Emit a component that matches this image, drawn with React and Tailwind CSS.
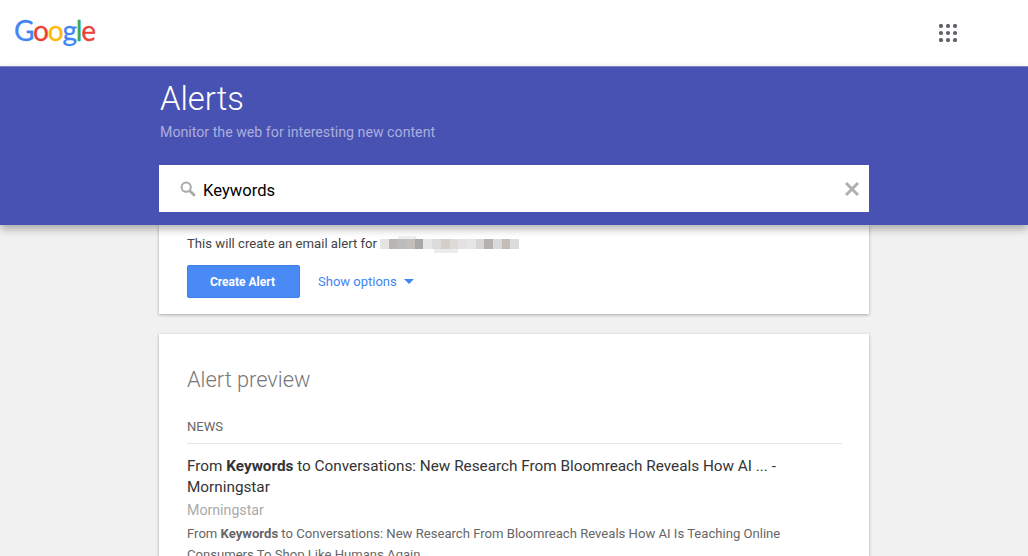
const font = "font-['Roboto','Liberation_Sans',sans-serif]";

const blurBlocks = [
  'bg-[#e4e4e4]', 'bg-[#b9b5b2]', 'bg-[#bdbcbd]', 'bg-[#c3bfbb]', 'bg-[#aaa8a7]',
  'bg-[#e6e6e6]', 'bg-[#dcdcdc]', 'bg-[#d2ceca]', 'bg-[#dddbd9]', 'bg-[#e2e2e2]',
  'bg-[#e6e6e6]', 'bg-[#d8d6d4]', 'bg-[#b5b1ae]', 'bg-[#d9dadc]', 'bg-[#c3bdb9]',
  'bg-[#dadcde]',
];

const Logo = () => (
  <span className="font-['Lato',sans-serif] text-[28px] leading-none tracking-[-1.2px] [-webkit-text-stroke:0.3px] select-none -mt-[6px]">
    <span className="text-[#4285f4]">G</span>
    <span className="text-[#ea4335]">o</span>
    <span className="text-[#fbbc05]">o</span>
    <span className="text-[#4285f4]">g</span>
    <span className="text-[#34a853]">l</span>
    <span className="text-[#ea4335]">e</span>
  </span>
);

const AppsIcon = () => (
  <svg width="18" height="18" viewBox="0 0 18 18" fill="#5f6368">
    {[2, 9, 16].map(y => [2, 9, 16].map(x => <circle key={`${x}-${y}`} cx={x} cy={y} r="2.1" />))}
  </svg>
);

const SearchIcon = () => (
  <svg width="16" height="16" viewBox="0 0 16 16" fill="none" stroke="#aaaaaa" className="shrink-0">
    <circle cx="6.2" cy="6.2" r="4.6" strokeWidth="2" />
    <path d="M9.8 9.8l5 5" strokeWidth="2.8" />
  </svg>
);

export default function App() {
  return (
    <div className={`${font} h-[556px] overflow-hidden bg-[#f1f1f1]`}>
      <header className="h-[66px] bg-white flex items-center justify-between pl-[14px] pr-[71px]">
        <Logo />
        <AppsIcon />
      </header>

      <div className="relative z-10 h-[159px] bg-[#4852b2] border-t border-[#7c84c8] shadow-[0_4px_8px_rgba(0,0,0,0.3)] pl-[159px]">
        <h1 className="text-[32.8px] leading-[38px] font-light text-white mt-[13px] pl-[1px]">Alerts</h1>
        <p className="text-[14.2px] leading-5 text-[#a9aedd] mt-[4px] pl-[1px]">Monitor the web for interesting new content</p>
        <div className="w-[710px] h-[47px] mt-[23px] bg-white flex items-center pl-[21px] pr-[8px]">
          <SearchIcon />
          <span className="ml-[7px] pt-[5px] text-[16.6px] text-black flex-1">Keywords</span>
          <svg width="18" height="18" viewBox="0 0 18 18" stroke="#b0b0b0" strokeWidth="3">
            <path d="M3 3l12 12M15 3L3 15" />
          </svg>
        </div>
      </div>

      <main className="w-[710px] ml-[159px]">
        <section className="h-[89px] bg-white shadow-[0_1px_3px_rgba(0,0,0,0.3)] px-[28px] pt-[10px]">
          <div className="flex items-center text-[13.15px] leading-[18px] text-[#444444]">
            <span>This will create an email alert for</span>
            <div className="relative flex ml-[3px] h-[10px]">
              {blurBlocks.map((c, i) => <div key={i} className={`w-[8.7px] ${c}`} />)}
              <div className="absolute left-[54px] top-[10px] w-[24px] h-[4px] bg-[#ececec]" />
              <div className="absolute left-[18px] -top-[3px] w-[18px] h-[3px] bg-[#efefef]" />
            </div>
          </div>
          <div className="flex items-center mt-[12px]">
            <button className="w-[113px] h-[33px] rounded-[2px] bg-[#4a8af4] border border-[#3f7fe8] text-white text-xs font-bold pr-[2px]">
              Create Alert
            </button>
            <span className="ml-[18px] text-[13px] text-[#4285f4]">Show options</span>
            <span className="ml-[7px] w-0 h-0 border-x-[5px] border-x-transparent border-t-[5px] border-t-[#4285f4]" />
          </div>
        </section>

        <section className="mt-[20px] bg-white shadow-[0_1px_3px_rgba(0,0,0,0.3)] pl-[28px] pr-[27px] pt-[32px] pb-6">
          <h2 className="text-[21.8px] leading-7 font-light text-[#777777]">Alert preview</h2>
          <div className="mt-[24px] pb-[7px] border-b border-[#e5e5e5] text-[13px] leading-[18px] text-[#666666]">NEWS</div>
          <h3 className="mt-[12px] text-[15.3px] leading-[21px] text-[#333333]">
            From <b className="font-bold">Keywords</b> to Conversations: New Research From Bloomreach Reveals How AI ... - Morningstar
          </h3>
          <p className="mt-[2px] text-[14.2px] leading-[20px] text-[#aaaaaa]">Morningstar</p>
          <p className="mt-[3px] text-[13.1px] leading-[21px] text-[#666666]">
            From <b className="font-bold">Keywords</b> to Conversations: New Research From Bloomreach Reveals How AI Is Teaching Online Consumers To Shop Like Humans Again
          </p>
        </section>
      </main>
    </div>
  );
}
